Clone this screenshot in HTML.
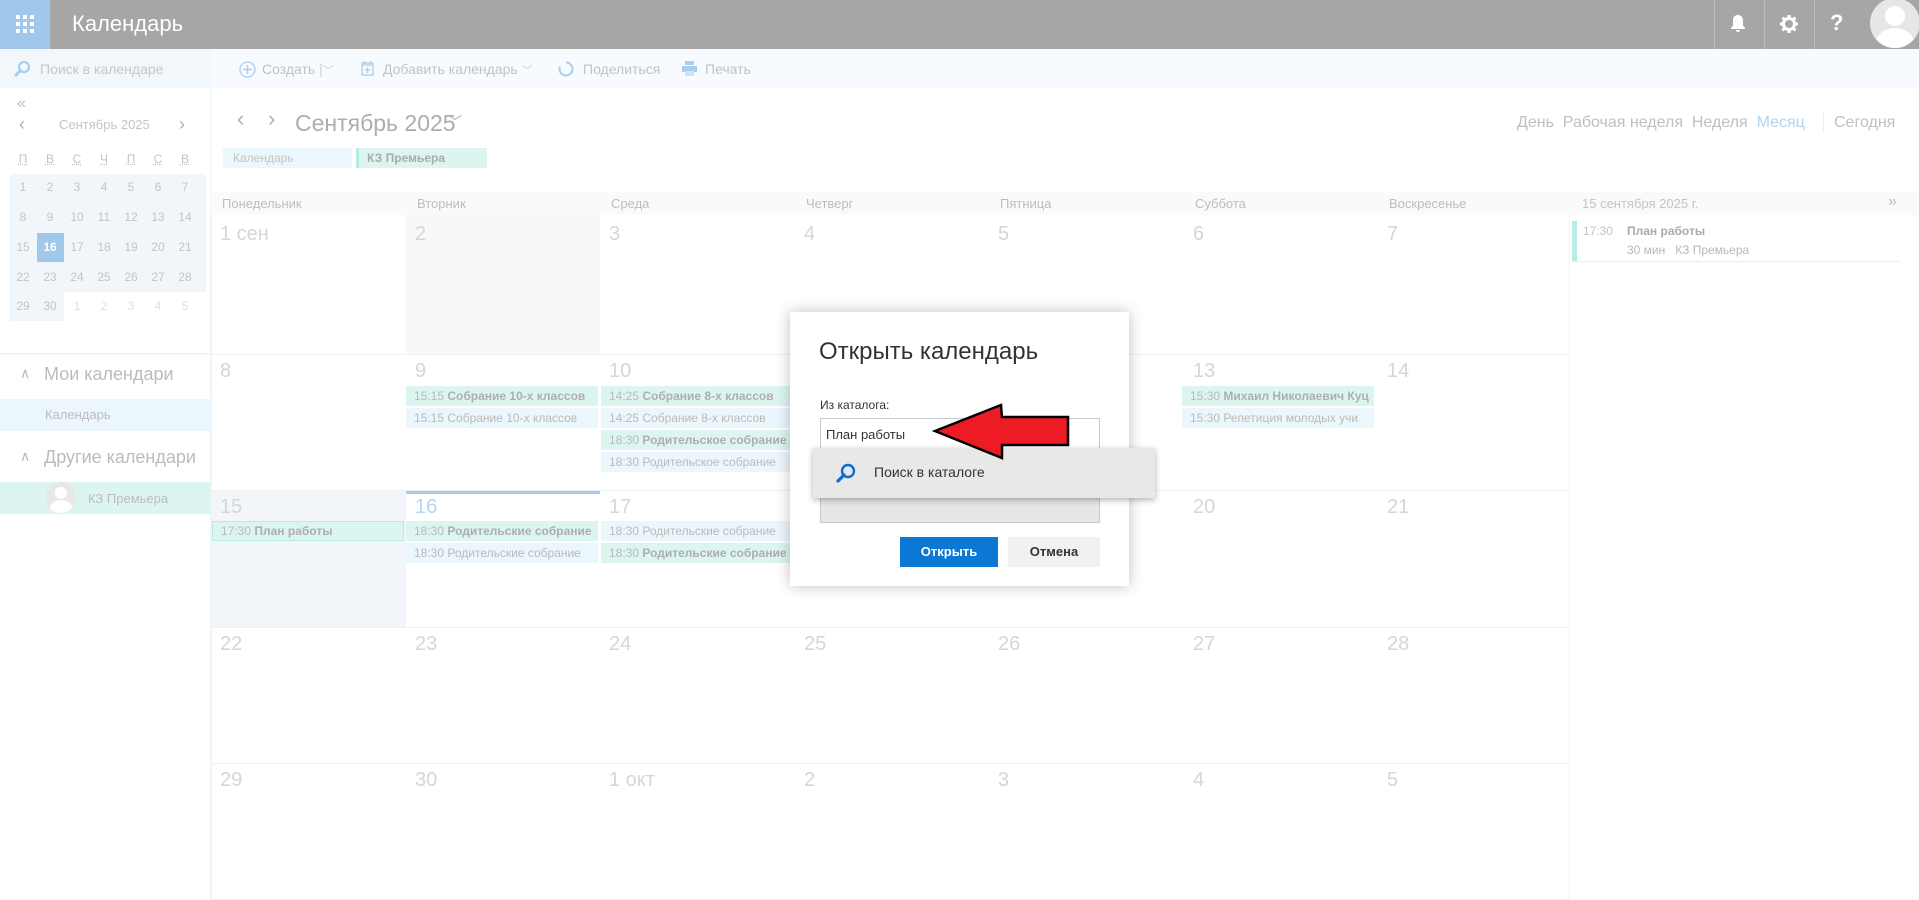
<!DOCTYPE html>
<html><head><meta charset="utf-8"><style>
*{margin:0;padding:0;box-sizing:border-box}
body{width:1919px;height:900px;position:relative;overflow:hidden;background:#fff;font-family:"Liberation Sans","DejaVu Sans",sans-serif;color:#b5b5b5}
.a{position:absolute;white-space:nowrap}
.hd{left:0;top:0;width:1919px;height:49px;background:#a6a6a6}
.ev{position:absolute;height:20px;font-size:12px;line-height:20px;padding-left:8px;overflow:hidden;white-space:nowrap;color:#bababa}
.ev b{color:#aeaeae}
.m{background:#dcf5f1}.bl{background:#ecf6fd}
.dn{position:absolute;font-size:20px;color:#d6d6d6}
.wd{position:absolute;top:192px;font-size:13px;line-height:23px;color:#bdbdbd}
.hl{position:absolute;left:211px;width:1358px;height:1px;background:#f0f0f0}
.vl{position:absolute;top:215px;width:1px;height:685px;background:#f3f3f3}
.mc{position:absolute;font-size:12px;color:#c4c4c4;width:26px;text-align:center}
</style></head><body>
<div class="a hd"></div>
<div class="a" style="left:0;top:0;width:50px;height:49px;background:#9fc8ea"></div>
<svg class="a" style="left:15px;top:14px" width="20" height="20" viewBox="0 0 20 20" fill="#fff"><rect x="1" y="1" width="4" height="4"/><rect x="8" y="1" width="4" height="4"/><rect x="15" y="1" width="4" height="4"/><rect x="1" y="8" width="4" height="4"/><rect x="8" y="8" width="4" height="4"/><rect x="15" y="8" width="4" height="4"/><rect x="1" y="15" width="4" height="4"/><rect x="8" y="15" width="4" height="4"/><rect x="15" y="15" width="4" height="4"/></svg>
<div class="a" style="left:72px;top:11px;font-size:22px;color:#fff">Календарь</div>
<div class="a" style="left:1714px;top:0;width:1px;height:49px;background:#bdbdbd"></div>
<div class="a" style="left:1764px;top:0;width:1px;height:49px;background:#bdbdbd"></div>
<div class="a" style="left:1814px;top:0;width:1px;height:49px;background:#bdbdbd"></div>
<svg class="a" style="left:1729px;top:14px" width="18" height="20" viewBox="0 0 18 20" fill="#fff"><path d="M9 1c-3.5 0-5 2.5-5 5.5v5L2 14v1h14v-1l-2-2.5v-5C14 3.5 12.5 1 9 1zM7 16h4a2 2 0 0 1-4 0z"/></svg>
<svg class="a" style="left:1780px;top:15px" width="18" height="18" viewBox="0 0 18 18"><circle cx="9" cy="9" r="5.5" fill="none" stroke="#fff" stroke-width="3"/><g stroke="#fff" stroke-width="3"><path d="M9 0v4M9 14v4M0 9h4M14 9h4M2.6 2.6l2.8 2.8M12.6 12.6l2.8 2.8M2.6 15.4l2.8-2.8M12.6 5.4l2.8-2.8"/></g></svg>
<div class="a" style="left:1830px;top:10px;font-size:22px;font-weight:bold;color:#fff">?</div>
<div class="a" style="left:1870px;top:-2px;width:50px;height:50px;border-radius:50%;background:#e6e6e6;overflow:hidden"><div class="a" style="left:15px;top:8px;width:20px;height:20px;border-radius:50%;background:#fff"></div><div class="a" style="left:6px;top:30px;width:38px;height:30px;border-radius:50%;background:#fff"></div></div>

<div class="a" style="left:0;top:49px;width:211px;height:39px;background:#f2f7fc"></div>
<div class="a" style="left:211px;top:49px;width:1708px;height:39px;background:#f7fbff"></div>
<svg class="a" style="left:13px;top:60px" width="18" height="18" viewBox="0 0 18 18"><circle cx="11" cy="7" r="5" fill="none" stroke="#a9cdef" stroke-width="2.2"/><path d="M7.5 10.5L2 16" stroke="#a9cdef" stroke-width="3"/></svg>
<div class="a" style="left:40px;top:61px;font-size:14px;color:#c6c6c6">Поиск в календаре</div>
<svg class="a" style="left:239px;top:61px" width="17" height="17" viewBox="0 0 17 17"><circle cx="8.5" cy="8.5" r="7.5" fill="none" stroke="#a9cdef" stroke-width="1.3"/><path d="M8.5 4v9M4 8.5h9" stroke="#a9cdef" stroke-width="1.5"/></svg>
<div class="a" style="left:262px;top:61px;font-size:14px;color:#c2c2c2">Создать <span style="color:#ccc">|</span><span style="color:#ccc;font-size:11px">﹀</span></div>
<svg class="a" style="left:361px;top:60px" width="13" height="16" viewBox="0 0 13 16"><rect x="1" y="3" width="11" height="12" fill="none" stroke="#a9cdef" stroke-width="1.3"/><path d="M1 5h11M6.5 7v6M3.5 10h6M3.5 1v3M9.5 1v3" stroke="#a9cdef" stroke-width="1.3"/></svg>
<div class="a" style="left:383px;top:61px;font-size:14px;color:#c2c2c2">Добавить календарь <span style="color:#ccc;font-size:11px">﹀</span></div>
<svg class="a" style="left:558px;top:61px" width="16" height="16" viewBox="0 0 16 16"><path d="M8 1.5a6.5 6.5 0 1 1-6 4" fill="none" stroke="#a9cdef" stroke-width="2"/></svg>
<div class="a" style="left:583px;top:61px;font-size:14px;color:#c2c2c2">Поделиться</div>
<svg class="a" style="left:682px;top:61px" width="15" height="15" viewBox="0 0 15 15" fill="#a9cdef"><rect x="3" y="0" width="9" height="4"/><rect x="0" y="5" width="15" height="6"/><rect x="3" y="10" width="9" height="5" fill="#cfe3f6"/></svg>
<div class="a" style="left:705px;top:61px;font-size:14px;color:#c2c2c2">Печать</div>

<div class="a" style="left:17px;top:95px;font-size:16px;color:#bbb">«</div>
<div class="a" style="left:19px;top:114px;font-size:18px;color:#b0b0b0">‹</div>
<div class="a" style="left:59px;top:117px;font-size:13px;color:#c4c4c4">Сентябрь 2025</div>
<div class="a" style="left:179px;top:114px;font-size:18px;color:#b0b0b0">›</div>
<div class="a" style="left:10px;top:174px;width:196px;height:147px;background:#f1f6fb"></div>
<div class="a" style="left:64px;top:292px;width:142px;height:29px;background:#fff"></div>
<div class="a" style="left:37px;top:233px;width:27px;height:29px;background:#9fc8ea"></div>
<div class="mc" style="left:10px;top:152px;text-decoration:underline dotted">П</div><div class="mc" style="left:37px;top:152px;text-decoration:underline dotted">В</div><div class="mc" style="left:64px;top:152px;text-decoration:underline dotted">С</div><div class="mc" style="left:91px;top:152px;text-decoration:underline dotted">Ч</div><div class="mc" style="left:118px;top:152px;text-decoration:underline dotted">П</div><div class="mc" style="left:145px;top:152px;text-decoration:underline dotted">С</div><div class="mc" style="left:172px;top:152px;text-decoration:underline dotted">В</div>
<div class="mc" style="left:10px;top:180px">1</div><div class="mc" style="left:37px;top:180px">2</div><div class="mc" style="left:64px;top:180px">3</div><div class="mc" style="left:91px;top:180px">4</div><div class="mc" style="left:118px;top:180px">5</div><div class="mc" style="left:145px;top:180px">6</div><div class="mc" style="left:172px;top:180px">7</div>
<div class="mc" style="left:10px;top:210px">8</div><div class="mc" style="left:37px;top:210px">9</div><div class="mc" style="left:64px;top:210px">10</div><div class="mc" style="left:91px;top:210px">11</div><div class="mc" style="left:118px;top:210px">12</div><div class="mc" style="left:145px;top:210px">13</div><div class="mc" style="left:172px;top:210px">14</div>
<div class="mc" style="left:10px;top:240px">15</div><div class="mc" style="left:37px;top:240px;color:#fff;font-weight:bold">16</div><div class="mc" style="left:64px;top:240px">17</div><div class="mc" style="left:91px;top:240px">18</div><div class="mc" style="left:118px;top:240px">19</div><div class="mc" style="left:145px;top:240px">20</div><div class="mc" style="left:172px;top:240px">21</div>
<div class="mc" style="left:10px;top:270px">22</div><div class="mc" style="left:37px;top:270px">23</div><div class="mc" style="left:64px;top:270px">24</div><div class="mc" style="left:91px;top:270px">25</div><div class="mc" style="left:118px;top:270px">26</div><div class="mc" style="left:145px;top:270px">27</div><div class="mc" style="left:172px;top:270px">28</div>
<div class="mc" style="left:10px;top:299px">29</div><div class="mc" style="left:37px;top:299px">30</div><div class="mc" style="left:64px;top:299px;color:#e0e0e0">1</div><div class="mc" style="left:91px;top:299px;color:#e0e0e0">2</div><div class="mc" style="left:118px;top:299px;color:#e0e0e0">3</div><div class="mc" style="left:145px;top:299px;color:#e0e0e0">4</div><div class="mc" style="left:172px;top:299px;color:#e0e0e0">5</div>
<div class="a" style="left:0;top:353px;width:211px;height:2px;background:#f3f3f3"></div>
<div class="a" style="left:210px;top:88px;width:1px;height:812px;background:#f3f3f3"></div>
<div class="a" style="left:20px;top:365px;font-size:14px;color:#bbb">∧</div>
<div class="a" style="left:44px;top:364px;font-size:18px;color:#bcbcbc">Мои календари</div>
<div class="a" style="left:0;top:399px;width:211px;height:32px;background:#ebf6fd"></div>
<div class="a" style="left:45px;top:407px;font-size:13px;color:#bcbcbc">Календарь</div>
<div class="a" style="left:20px;top:448px;font-size:14px;color:#bbb">∧</div>
<div class="a" style="left:44px;top:447px;font-size:18px;color:#bcbcbc">Другие календари</div>
<div class="a" style="left:0;top:482px;width:211px;height:32px;background:#dcf5f1"></div>
<div class="a" style="left:45px;top:482px;width:31px;height:31px;border-radius:50%;background:#e8e8e8;overflow:hidden"><div class="a" style="left:10px;top:5px;width:12px;height:12px;border-radius:50%;background:#fff"></div><div class="a" style="left:5px;top:18px;width:22px;height:16px;border-radius:50%;background:#fff"></div></div>
<div class="a" style="left:88px;top:491px;font-size:13px;color:#bcbcbc">КЗ Премьера</div>

<div class="a" style="left:237px;top:106px;font-size:22px;color:#b0b0b0">‹</div>
<div class="a" style="left:268px;top:106px;font-size:22px;color:#b0b0b0">›</div>
<div class="a" style="left:295px;top:110px;font-size:23px;color:#adadad">Сентябрь 2025</div>
<div class="a" style="left:448px;top:112px;font-size:14px;color:#b0b0b0">﹀</div>
<div class="a" style="left:1517px;top:114px;font-size:16px;color:#c0c0c0">День&nbsp; Рабочая неделя&nbsp; Неделя&nbsp; <span style="color:#aed4f2">Месяц</span></div>
<div class="a" style="left:1823px;top:113px;width:1px;height:20px;background:#eee"></div>
<div class="a" style="left:1834px;top:114px;font-size:16px;color:#c0c0c0">Сегодня</div>
<div class="a" style="left:223px;top:148px;width:129px;height:20px;background:#ecf6fd;font-size:12px;line-height:20px;padding-left:10px;color:#c4c4c4">Календарь</div>
<div class="a" style="left:356px;top:148px;width:131px;height:20px;background:#dcf5f1;border-left:3px solid #b5ece3;font-size:12px;line-height:20px;padding-left:8px;color:#aaa;font-weight:bold">КЗ Премьера</div>

<div class="a" style="left:211px;top:192px;width:1708px;height:23px;background:#fafafa"></div>
<div class="wd" style="left:222px">Понедельник</div><div class="wd" style="left:417px">Вторник</div><div class="wd" style="left:611px">Среда</div><div class="wd" style="left:806px">Четверг</div><div class="wd" style="left:1000px">Пятница</div><div class="wd" style="left:1195px">Суббота</div><div class="wd" style="left:1389px">Воскресенье</div>
<div class="a" style="left:406px;top:215px;width:194px;height:139px;background:#f8f8f8"></div>
<div class="a" style="left:211px;top:490px;width:195px;height:137px;background:#f2f6fa"></div>
<div class="a" style="left:406px;top:490px;width:194px;height:4px;background:#a9cbe9"></div>
<div class="hl" style="top:354px"></div><div class="hl" style="top:490px"></div><div class="hl" style="top:627px"></div><div class="hl" style="top:763px"></div><div class="hl" style="top:899px"></div>
<div class="vl" style="left:211px"></div><div class="vl" style="left:1569px"></div>

<div class="dn" style="left:220px;top:223px">1 сен</div><div class="dn" style="left:415px;top:223px">2</div><div class="dn" style="left:609px;top:223px">3</div><div class="dn" style="left:804px;top:223px">4</div><div class="dn" style="left:998px;top:223px">5</div><div class="dn" style="left:1193px;top:223px">6</div><div class="dn" style="left:1387px;top:223px">7</div>
<div class="dn" style="left:220px;top:360px">8</div><div class="dn" style="left:415px;top:360px">9</div><div class="dn" style="left:609px;top:360px">10</div><div class="dn" style="left:804px;top:360px">11</div><div class="dn" style="left:998px;top:360px">12</div><div class="dn" style="left:1193px;top:360px">13</div><div class="dn" style="left:1387px;top:360px">14</div>
<div class="dn" style="left:220px;top:496px">15</div><div class="dn" style="left:415px;top:496px;color:#b5d5f0">16</div><div class="dn" style="left:609px;top:496px">17</div><div class="dn" style="left:804px;top:496px">18</div><div class="dn" style="left:998px;top:496px">19</div><div class="dn" style="left:1193px;top:496px">20</div><div class="dn" style="left:1387px;top:496px">21</div>
<div class="dn" style="left:220px;top:633px">22</div><div class="dn" style="left:415px;top:633px">23</div><div class="dn" style="left:609px;top:633px">24</div><div class="dn" style="left:804px;top:633px">25</div><div class="dn" style="left:998px;top:633px">26</div><div class="dn" style="left:1193px;top:633px">27</div><div class="dn" style="left:1387px;top:633px">28</div>
<div class="dn" style="left:220px;top:769px">29</div><div class="dn" style="left:415px;top:769px">30</div><div class="dn" style="left:609px;top:769px">1 окт</div><div class="dn" style="left:804px;top:769px">2</div><div class="dn" style="left:998px;top:769px">3</div><div class="dn" style="left:1193px;top:769px">4</div><div class="dn" style="left:1387px;top:769px">5</div>

<div class="ev m" style="left:406px;top:386px;width:192px">15:15 <b>Собрание 10-х классов</b></div>
<div class="ev bl" style="left:406px;top:408px;width:192px">15:15 Собрание 10-х классов</div>
<div class="ev m" style="left:601px;top:386px;width:192px">14:25 <b>Собрание 8-х классов</b></div>
<div class="ev bl" style="left:601px;top:408px;width:192px">14:25 Собрание 8-х классов</div>
<div class="ev m" style="left:601px;top:430px;width:192px">18:30 <b>Родительское собрание</b></div>
<div class="ev bl" style="left:601px;top:452px;width:192px">18:30 Родительское собрание</div>
<div class="ev m" style="left:1182px;top:386px;width:192px">15:30 <b>Михаил Николаевич Куц</b></div>
<div class="ev bl" style="left:1182px;top:408px;width:192px">15:30 Репетиция молодых учи</div>
<div class="ev m" style="left:212px;top:521px;width:192px;border:1px solid #b5ece3;line-height:18px">17:30 <b>План работы</b></div>
<div class="ev m" style="left:406px;top:521px;width:192px">18:30 <b>Родительские собрание</b></div>
<div class="ev bl" style="left:406px;top:543px;width:192px">18:30 Родительские собрание</div>
<div class="ev bl" style="left:601px;top:521px;width:192px">18:30 Родительские собрание</div>
<div class="ev m" style="left:601px;top:543px;width:192px">18:30 <b>Родительские собрание</b></div>

<div class="a" style="left:1582px;top:196px;font-size:13px;color:#c4c4c4">15 сентября 2025 г.</div>
<div class="a" style="left:1888px;top:193px;font-size:16px;color:#c0c0c0">»</div>
<div class="a" style="left:1572px;top:221px;width:5px;height:40px;background:#b8ece6"></div>
<div class="a" style="left:1583px;top:224px;font-size:12px;color:#c4c4c4">17:30</div>
<div class="a" style="left:1627px;top:224px;font-size:12px;color:#aaa;font-weight:bold">План работы</div>
<div class="a" style="left:1627px;top:243px;font-size:12px;color:#b8b8b8">30 мин &nbsp; КЗ Премьера</div>
<div class="a" style="left:1572px;top:261px;width:328px;height:1px;background:#eee"></div>

<div class="a" style="left:790px;top:312px;width:339px;height:274px;background:#fff;box-shadow:0 0 14px rgba(0,0,0,.25)"></div>
<div class="a" style="left:819px;top:338px;font-size:24px;color:#333">Открыть календарь</div>
<div class="a" style="left:820px;top:398px;font-size:12px;color:#333">Из каталога:</div>
<div class="a" style="left:820px;top:418px;width:280px;height:105px;border:1px solid #c8c8c8;background:#e6e6e6"></div>
<div class="a" style="left:821px;top:419px;width:278px;height:30px;background:#fff"></div>
<div class="a" style="left:826px;top:427px;font-size:13px;color:#333">План работы</div>
<div class="a" style="left:813px;top:448px;width:342px;height:50px;background:#e8e8e8;box-shadow:0 2px 6px rgba(0,0,0,.3)"></div>
<svg class="a" style="left:835px;top:462px" width="22" height="22" viewBox="0 0 22 22"><circle cx="13" cy="9" r="6" fill="none" stroke="#0b6fd0" stroke-width="2.4"/><path d="M9 13L3 19" stroke="#0b6fd0" stroke-width="3.2" stroke-linecap="round"/></svg>
<div class="a" style="left:874px;top:464px;font-size:14px;color:#333">Поиск в каталоге</div>
<div class="a" style="left:900px;top:537px;width:98px;height:30px;background:#0b78d6;color:#fff;font-weight:bold;font-size:13px;line-height:30px;text-align:center">Открыть</div>
<div class="a" style="left:1008px;top:537px;width:92px;height:30px;background:#f1f1f1;color:#333;font-weight:bold;font-size:13px;line-height:30px;text-align:center">Отмена</div>
<svg class="a" style="left:930px;top:400px" width="145" height="62" viewBox="930 400 145 62"><polygon points="935,431 1001,405 1002,417 1068,417 1068,445 1002,445 1002,458" fill="#ed1c24" stroke="#000" stroke-width="2.5" stroke-linejoin="miter"/></svg>
</body></html>
